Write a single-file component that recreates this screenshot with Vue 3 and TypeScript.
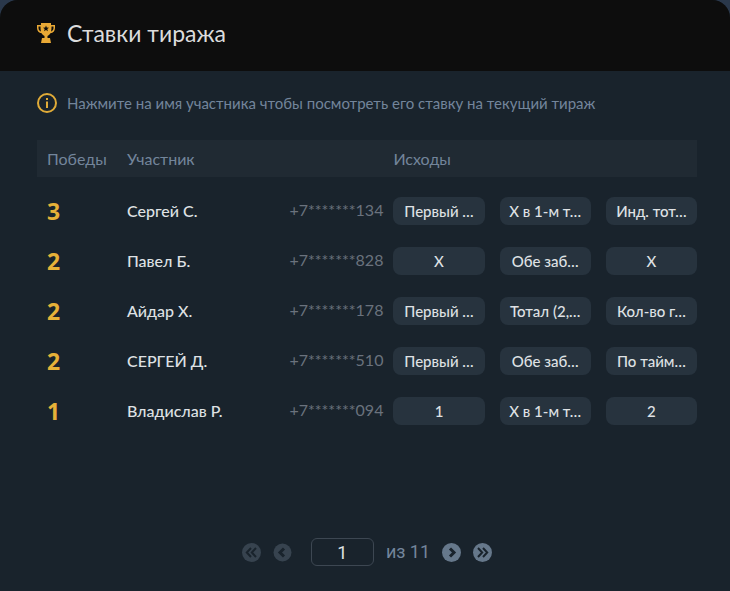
<script setup lang="ts">
import { ref } from 'vue'

interface Bet {
  wins: number
  name: string
  phone: string
  outcomes: string[]
}

const bets: Bet[] = [
  { wins: 3, name: 'Сергей С.', phone: '+7*******134', outcomes: ['Первый …', 'Х в 1-м т…', 'Инд. тот…'] },
  { wins: 2, name: 'Павел Б.', phone: '+7*******828', outcomes: ['Х', 'Обе заб…', 'Х'] },
  { wins: 2, name: 'Айдар Х.', phone: '+7*******178', outcomes: ['Первый …', 'Тотал (2,…', 'Кол-во г…'] },
  { wins: 2, name: 'СЕРГЕЙ Д.', phone: '+7*******510', outcomes: ['Первый …', 'Обе заб…', 'По тайм…'] },
  { wins: 1, name: 'Владислав Р.', phone: '+7*******094', outcomes: ['1', 'Х в 1-м т…', '2'] },
]

const page = ref('1')
const total = 11
</script>

<template>
  <main class="card">
    <header class="head">
      <svg class="cup" viewBox="0 0 18 20" aria-hidden="true">
        <path
          fill="#e9a935"
          fill-rule="evenodd"
          d="M4 0h10v2h4v3c0 3-2 5-4.600 5.200C12.500 11.700 11.500 12.500 10.500 13v2H13l1 5H4l1-5h2.500v-2C6.500 12.500 5.500 11.700 4.600 10.200 2 10 0 8 0 5V2h4zM1.500 3.500V5c0 1.600.9 2.900 2.400 3.400C3.600 7 3.500 5.300 3.500 3.500zm13 0c0 1.800-.1 3.500-.4 4.900 1.500-.5 2.400-1.800 2.400-3.400V3.500zM9 2.500 8.200 4.600 6 4.700l1.700 1.400L7.100 8.300 9 7.100l1.900 1.200-.6-2.200L12 4.700l-2.200-.1z"
        />
      </svg>
      <h1>Ставки тиража</h1>
    </header>

    <section class="body">
      <p class="hint">
        <svg class="info" viewBox="0 0 20 20" fill="none" stroke="#e0ab38" stroke-width="2" aria-hidden="true">
          <circle cx="10" cy="10" r="9" />
          <path d="M10 8.500v6.500M10 5v2" />
        </svg>
        <span>Нажмите на имя участника чтобы посмотреть его ставку на текущий тираж</span>
      </p>

      <table class="bets">
        <colgroup>
          <col class="c-wins" />
          <col class="c-name" />
          <col class="c-phone" />
          <col class="c-out" />
        </colgroup>
        <thead>
          <tr>
            <th scope="col">Победы</th>
            <th scope="col" colspan="2" class="flush">Участник</th>
            <th scope="col" class="flush">Исходы</th>
          </tr>
        </thead>
        <tbody>
          <tr v-for="bet in bets" :key="bet.phone">
            <td class="wins">{{ bet.wins }}</td>
            <td><button type="button" class="name">{{ bet.name }}</button></td>
            <td class="phone">{{ bet.phone }}</td>
            <td>
              <div class="outcomes">
                <span v-for="(o, i) in bet.outcomes" :key="i" class="chip">{{ o }}</span>
              </div>
            </td>
          </tr>
        </tbody>
      </table>

      <nav class="pager" aria-label="Страницы">
        <button type="button" class="nav" disabled aria-label="Первая">
          <svg viewBox="0 0 19 19"><circle cx="9.500" cy="9.500" r="9.500" /><path d="M9 5 4.800 9.500 9 14M14 5 9.800 9.500 14 14" /></svg>
        </button>
        <button type="button" class="nav" disabled aria-label="Назад">
          <svg viewBox="0 0 19 19"><circle cx="9.500" cy="9.500" r="9" /><path class="bold" d="M11 5.500 7 9.500l4 4" /></svg>
        </button>
        <input v-model="page" class="page" type="text" inputmode="numeric" aria-label="Страница" />
        <span class="total">из {{ total }}</span>
        <button type="button" class="nav" aria-label="Вперёд">
          <svg viewBox="0 0 19 19"><circle cx="9.500" cy="9.500" r="9.500" /><path class="bold" d="m8 5.500 4 4-4 4" /></svg>
        </button>
        <button type="button" class="nav" aria-label="Последняя">
          <svg viewBox="0 0 19 19"><circle cx="9.500" cy="9.500" r="9.500" /><path d="m5 5 4.200 4.500L5 14M10 5l4.200 4.500L10 14" /></svg>
        </button>
      </nav>
    </section>
  </main>
</template>

<style>
body {
  background: #2a384b;
}
</style>

<style scoped>
.card {
  display: flex;
  flex-direction: column;
  min-height: 100vh;
  border-radius: 18px 18px 0 0;
  overflow: hidden;
  background: #19232c;
  color: #dfe1e4;
  font-family: Lato, "Noto Sans", sans-serif;
  font-size: 16px;
  line-height: 20px;
}
.head {
  display: flex;
  align-items: center;
  gap: 12px;
  padding: 17px 37px 22px;
  background: #0d0d0d;
}
.cup {
  width: 18px;
  height: 20px;
}
h1 {
  margin: 0;
  font-size: 23px;
  font-weight: 400;
  line-height: 32px;
  color: #dcdcdc;
}
.body {
  flex: 1;
  display: flex;
  flex-direction: column;
  padding: 22px 33px 25px 37px;
}
.hint {
  display: flex;
  align-items: center;
  gap: 10px;
  margin: 0 0 27px;
  font-size: 15px;
  color: #73859b;
}
.info {
  flex: none;
  width: 20px;
  height: 20px;
}
.bets {
  width: 100%;
  table-layout: fixed;
  border-collapse: collapse;
}
.c-wins {
  width: 90px;
}
.c-phone {
  width: 104px;
}
.c-out {
  width: 46%;
}
th {
  height: 37px;
  padding: 0 0 0 10px;
  text-align: left;
  font-weight: 400;
  color: #73859b;
  background: #202a33;
}
th.flush {
  padding-left: 0;
}
tbody::before {
  content: "";
  display: block;
  height: 9px;
}
td {
  box-sizing: border-box;
  height: 50px;
  padding: 0;
}
.wins {
  padding-left: 10px;
  font-family: "Noto Sans", sans-serif;
  font-size: 23px;
  font-weight: 700;
  color: #e6b138;
}
.name {
  padding: 0;
  border: 0;
  background: none;
  color: inherit;
  font: inherit;
  font-weight: 500;
  cursor: pointer;
}
.phone {
  padding: 0 10px 2px 0;
  text-align: right;
  white-space: nowrap;
  color: #6a727d;
}
.outcomes {
  display: grid;
  grid-template-columns: repeat(3, minmax(0, 1fr));
  gap: 15px;
}
.chip {
  border-radius: 8px;
  background: #27333e;
  font-size: 15px;
  font-weight: 500;
  line-height: 28px;
  text-align: center;
  white-space: nowrap;
}
.pager {
  display: flex;
  align-items: center;
  justify-content: center;
  gap: 12px;
  margin-top: auto;
}
.nav {
  padding: 0;
  border: 0;
  background: none;
  color: #66788b;
  cursor: pointer;
}
.nav:disabled {
  color: #37434f;
  cursor: default;
}
.nav svg {
  display: block;
  width: 19px;
  height: 19px;
}
.nav circle {
  fill: currentColor;
}
.nav path {
  fill: none;
  stroke: #19232c;
  stroke-width: 2;
}
.nav path.bold {
  stroke-width: 3;
}
.page {
  box-sizing: border-box;
  width: 63px;
  height: 28px;
  margin-left: 7px;
  padding: 0;
  border: 1px solid #3d4752;
  border-radius: 6px;
  background: transparent;
  color: #dfe1e4;
  font-family: Roboto, sans-serif;
  font-size: 18px;
  text-align: center;
}
.total {
  font-family: Roboto, sans-serif;
  font-size: 18px;
  color: #73859b;
}
</style>
